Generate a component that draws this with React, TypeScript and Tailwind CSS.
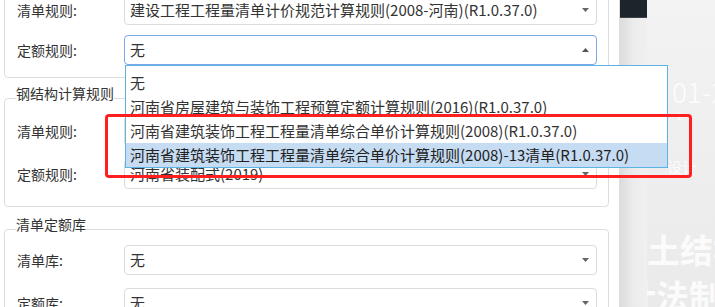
import React from 'react'

const font = { fontFamily: '"Noto Sans CJK SC", "Noto Sans", sans-serif' }

function Caret({ up = false }: { up?: boolean }) {
  return (
    <svg width="7" height="4" viewBox="0 0 7 4" className="shrink-0">
      {up ? <path d="M0 4 L3.5 0 L7 4 Z" fill="#555" /> : <path d="M0 0 L7 0 L3.5 4 Z" fill="#666" />}
    </svg>
  )
}

function SelectRow({
  label,
  value,
  focused = false,
  gap,
}: {
  label: string
  value: string
  focused?: boolean
  gap?: string
}) {
  return (
    <div className={`flex items-center ${gap ?? ''}`}>
      <div className="w-[107px] shrink-0 text-[14px] leading-[20px] text-[#333]">{label}</div>
      <div
        className={`flex h-[30px] flex-1 items-center justify-between rounded-[4px] border bg-white pl-[5px] pr-[7px] text-[15px] leading-[20px] text-[#333] ${
          focused ? 'border-[#7ea6e8]' : 'border-[#dcdcdc]'
        }`}
      >
        <span className="whitespace-nowrap">{value}</span>
        <Caret up={focused} />
      </div>
    </div>
  )
}

const options = [
  '无',
  '河南省房屋建筑与装饰工程预算定额计算规则(2016)(R1.0.37.0)',
  '河南省建筑装饰工程工程量清单综合单价计算规则(2008)(R1.0.37.0)',
  '河南省建筑装饰工程工程量清单综合单价计算规则(2008)-13清单(R1.0.37.0)',
]

export default function App() {
  return (
    <div className="relative flex h-[307px] w-[715px] overflow-hidden bg-[#ededed]" style={font}>
      {/* settings panel */}
      <div className="flex w-[620px] shrink-0 flex-col border-r border-[#dedede] bg-white pl-[4px] pr-[10px]">
        <div className="-mt-[18px] flex flex-col gap-[10px] rounded-[4px] border border-[#dddddd] pb-[12px] pl-[12px] pr-[11px] pt-[12px]">
          <SelectRow label="清单规则:" value="建设工程工程量清单计价规范计算规则(2008-河南)(R1.0.37.0)" />
          <SelectRow label="定额规则:" value="无" focused />
        </div>

        <fieldset className="mt-[5px] rounded-[4px] border border-[#dddddd] pb-[17px] pl-[12px] pr-[11px] pt-[3px]">
          <legend className="-ml-px pb-[10px] text-[14px] leading-[20px] text-[#333]">钢结构计算规则</legend>
          <SelectRow label="清单规则:" value="无" />
          <SelectRow label="定额规则:" value="河南省装配式(2019)" gap="mt-[13px]" />
        </fieldset>

        <fieldset className="mt-[7px] rounded-[4px] border border-[#dddddd] pb-[17px] pl-[12px] pr-[11px] pt-[1px]">
          <legend className="-ml-px pb-[10px] text-[14px] leading-[20px] text-[#333]">清单定额库</legend>
          <SelectRow label="清单库:" value="无" />
          <SelectRow label="定额库:" value="无" gap="mt-[13px]" />
        </fieldset>
      </div>

      {/* backdrop behind the dialog */}
      <div className="flex w-[27px] shrink-0 flex-col">
        <div className="h-[18px] border-b border-[#3a4149] bg-[#1e242c]" />
        <div className="flex-1 bg-gradient-to-r from-[#dcdcdc] via-[#ececec] to-[#f0f0f0]" />
      </div>
      <div className="flex flex-1 flex-col overflow-hidden bg-gradient-to-b from-[#f3f3f3] to-[#eaeaea] text-white/80">
        <div className="ml-[25px] mt-[76px] whitespace-nowrap text-[28px] font-light leading-[30px]">01-2</div>
        <div className="ml-[30px] mt-[6px] text-[9px] leading-[10px]">2</div>
        <div className="mt-[21px] h-px w-full bg-white/70" />
        <div className="ml-[20px] mt-[14px] whitespace-nowrap text-[15px] leading-[20px]">设计</div>
        <div className="mt-[52px] whitespace-nowrap text-[33px] font-bold leading-[40px]">土结构</div>
        <div className="-ml-[24px] mt-[6px] whitespace-nowrap text-[33px] font-bold leading-[40px]">计法制图</div>
      </div>

      {/* open dropdown list */}
      <div className="absolute left-[125px] top-[65px] w-[543px] border border-[#5db3e4] bg-white pt-[5px] text-[15px] text-[#333]">
        {options.map((o, i) => (
          <div
            key={o}
            className={`flex h-[24px] items-center whitespace-nowrap pl-[4px] ${i === 3 ? 'bg-[#c6dcf3] text-[#222]' : ''}`}
          >
            {o}
          </div>
        ))}
      </div>

      {/* annotation box */}
      <div className="pointer-events-none absolute left-[105px] top-[114px] h-[64px] w-[587px] rounded-[4px] border-[3px] border-[#ff1f1f]" />
    </div>
  )
}
